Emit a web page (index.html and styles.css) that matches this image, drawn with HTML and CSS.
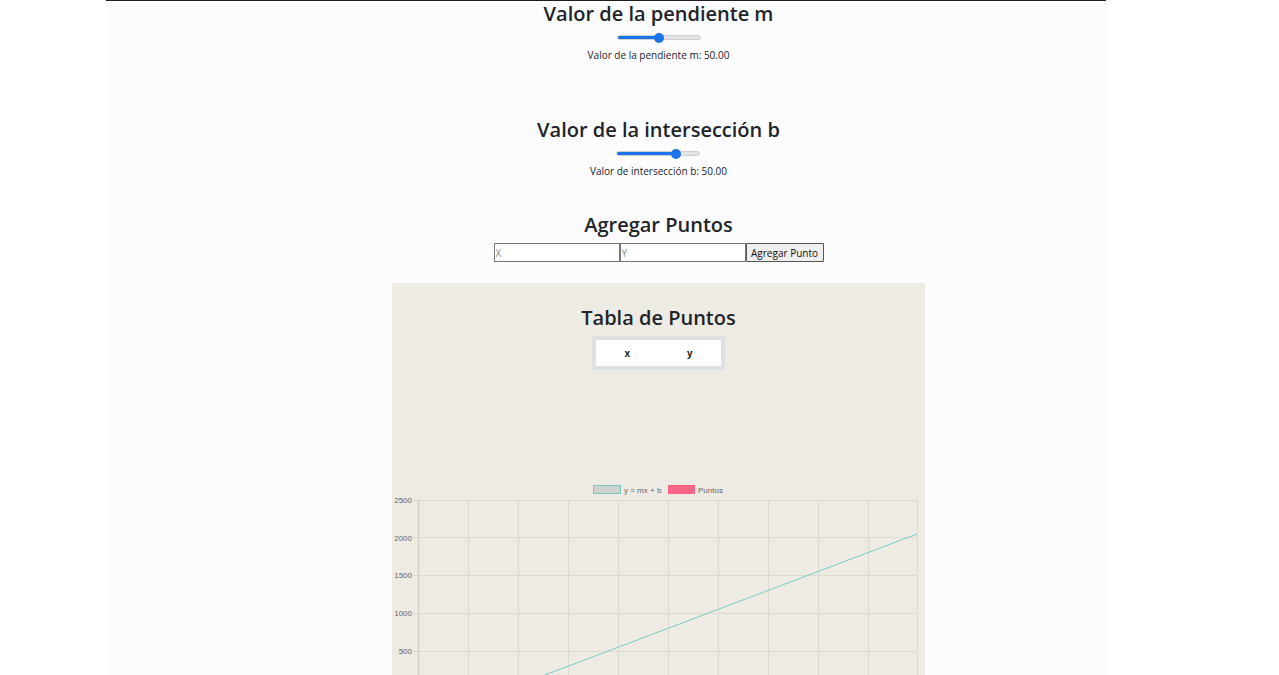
FILE: index.html
```html
<!DOCTYPE html>
<html lang="es">
<head>
<meta charset="utf-8">
<title>Regresión lineal</title>
<link rel="stylesheet" href="styles.css">
</head>
<body>
<div class="page">
  <div class="content">
    <section class="control first">
      <h2 class="title">Valor de la pendiente m</h2>
      <input class="slider" type="range" min="0" max="100" value="50" style="background: linear-gradient(to right, #1a73e8 0%, #1a73e8 50%, #e3e3e3 50%, #e3e3e3 100%);">
      <p class="value">Valor de la pendiente m: 50.00</p>
    </section>
    <section class="control second">
      <h2 class="title">Valor de la intersección b</h2>
      <input class="slider" type="range" min="-100" max="100" value="50" style="background: linear-gradient(to right, #1a73e8 0%, #1a73e8 75%, #e3e3e3 75%, #e3e3e3 100%);">
      <p class="value">Valor de intersección b: 50.00</p>
    </section>
    <section class="control third">
      <h2 class="title">Agregar Puntos</h2>
      <div class="add-row">
        <input class="field" type="text" placeholder="X">
        <input class="field" type="text" placeholder="Y">
        <button class="btn" type="button">Agregar Punto</button>
      </div>
    </section>
    <section class="chart-box">
      <h2 class="title">Tabla de Puntos</h2>
      <table class="points">
        <thead><tr><th>x</th><th>y</th></tr></thead>
        <tbody></tbody>
      </table>
      <svg class="chart" width="533" height="420" viewBox="0 0 533 420" xmlns="http://www.w3.org/2000/svg">
        <g class="legend">
          <rect x="201.5" y="105.5" width="27" height="8" fill="#cfd3cf" stroke="#7fc6c2" stroke-width="1"/>
          <text x="232" y="112.5">y = mx + b</text>
          <rect x="276.5" y="105.5" width="26" height="8" fill="#f8678a" stroke="#ff6384" stroke-width="1"/>
          <text x="306" y="112.5">Puntos</text>
        </g>
        <g class="grid" stroke="#dcd9d3" stroke-width="1">
          <line x1="21" y1="120.5" x2="526" y2="120.5"/>
          <line x1="21" y1="157.5" x2="526" y2="157.5"/>
          <line x1="21" y1="195.5" x2="526" y2="195.5"/>
          <line x1="21" y1="233.5" x2="526" y2="233.5"/>
          <line x1="21" y1="271.5" x2="526" y2="271.5"/>
          <line x1="21" y1="309.5" x2="526" y2="309.5"/>
          <line x1="76.5" y1="120" x2="76.5" y2="420"/>
          <line x1="126.5" y1="120" x2="126.5" y2="420"/>
          <line x1="176.5" y1="120" x2="176.5" y2="420"/>
          <line x1="226.5" y1="120" x2="226.5" y2="420"/>
          <line x1="276.5" y1="120" x2="276.5" y2="420"/>
          <line x1="326.5" y1="120" x2="326.5" y2="420"/>
          <line x1="376.5" y1="120" x2="376.5" y2="420"/>
          <line x1="426.5" y1="120" x2="426.5" y2="420"/>
          <line x1="476.5" y1="120" x2="476.5" y2="420"/>
          <line x1="525.5" y1="120" x2="525.5" y2="420"/>
        </g>
        <line x1="26.5" y1="120" x2="26.5" y2="420" stroke="#d2cfc9" stroke-width="1.5"/>
        <g class="ticks">
          <text x="20" y="123">2500</text>
          <text x="20" y="160.5">2000</text>
          <text x="20" y="198">1500</text>
          <text x="20" y="236">1000</text>
          <text x="20" y="274">500</text>
        </g>
        <line x1="116" y1="309" x2="525" y2="154" stroke="#7ccac4" stroke-width="1"/>
      </svg>
    </section>
  </div>
</div>
</body>
</html>
```

FILE: styles.css
```css
html, body {
  margin: 0;
  padding: 0;
  background: #ffffff;
}

body {
  font-family: "Open Sans", "Noto Sans", sans-serif;
  color: #212529;
}

.page {
  margin-left: 106px;
  width: 1000px;
  min-height: 675px;
  background: #fcfcfe;
  border-top: 1px solid #1e1e1e;
}

.content {
  width: 1105px;
  display: flex;
  flex-direction: column;
  align-items: center;
}

.control {
  display: flex;
  flex-direction: column;
  align-items: center;
}

.title {
  margin: 0;
  font-size: 20px;
  font-weight: 600;
  line-height: 26px;
  color: #212529;
}

.second {
  margin-top: 55px;
}

.third {
  margin-top: 34px;
}

.slider {
  -webkit-appearance: none;
  appearance: none;
  width: 84px;
  height: 5px;
  margin: 8px 0 0;
  border-radius: 3px;
  border: 1px solid #d0d0d0;
  box-sizing: border-box;
  outline: none;
}

.slider::-webkit-slider-thumb {
  -webkit-appearance: none;
  appearance: none;
  width: 10px;
  height: 10px;
  border-radius: 50%;
  background: #1a73e8;
  border: none;
}

.value {
  margin: 8px 0 0;
  font-size: 10px;
  line-height: 14px;
}

.add-row {
  display: flex;
  margin-top: 5px;
}

.field {
  width: 126px;
  height: 19px;
  box-sizing: border-box;
  border: 1px solid #767676;
  margin: 0;
  padding: 0 1px;
  font-family: "Open Sans", "Noto Sans", sans-serif;
  font-size: 10px;
  background: #ffffff;
}

.field::placeholder {
  color: #8a8a8a;
}

.btn {
  height: 19px;
  width: 78px;
  box-sizing: border-box;
  border: 1px solid #555;
  border-radius: 1px;
  background: #efefef;
  margin: 0;
  padding: 0;
  font-family: "Open Sans", "Noto Sans", sans-serif;
  font-size: 10px;
  color: #111;
}

.chart-box {
  margin-top: 21px;
  width: 533px;
  background: #eeebe5;
  display: flex;
  flex-direction: column;
  align-items: center;
  padding-top: 22px;
  height: 420px;
  overflow: hidden;
}

.points {
  margin-top: 5px;
  width: 133px;
  border: 4px solid #dfe0e4;
  border-collapse: separate;
  border-spacing: 0;
  background: #ffffff;
}

.points th {
  width: 50%;
  height: 26px;
  padding: 0;
  font-family: "Liberation Sans", Arial, sans-serif;
  font-size: 10px;
  font-weight: bold;
  color: #111;
  text-align: center;
}

.chart {
  display: block;
  margin-top: 10px;
  flex: none;
}

.chart text {
  font-family: "Liberation Sans", Arial, sans-serif;
  font-size: 8px;
  fill: #666666;
}

.chart .ticks text {
  text-anchor: end;
}
```
